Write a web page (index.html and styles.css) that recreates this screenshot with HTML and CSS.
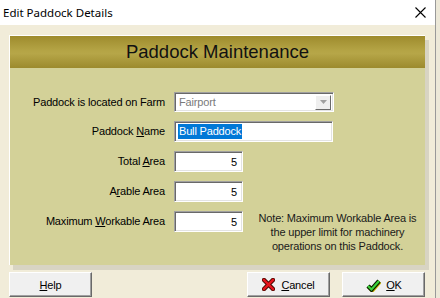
FILE: index.html
```html
<!DOCTYPE html>
<html lang="en">
<head>
  <meta charset="UTF-8">
  <title>Edit Paddock Details</title>
  <link rel="stylesheet" href="styles.css">
</head>
<body>
  <div class="window">
    <div class="titlebar">
      <span class="title">Edit Paddock Details</span>
      <svg class="close" width="11" height="11" viewBox="0 0 11 11">
        <path d="M0.5 0.5L10.5 10.5M10.5 0.5L0.5 10.5" stroke="#000" stroke-width="1.1"/>
      </svg>
    </div>

    <div class="dialog-body">
      <div class="panel">
        <div class="panel-header">Paddock Maintenance</div>
        <div class="panel-body">
          <div class="form-grid">
            <label class="row-label short">Paddock is located on Farm</label>
            <div class="field select disabled">
              <span>Fairport</span>
              <span class="drop-btn">
                <svg width="7" height="4" viewBox="0 0 7 4"><path d="M0 0H7L3.5 4Z" fill="#a0a0a0"/></svg>
              </span>
            </div>

            <label class="row-label">Paddock <u>N</u>ame</label>
            <div class="field name"><span class="selected">Bull Paddock</span></div>

            <label class="row-label">Total <u>A</u>rea</label>
            <div class="field num">5</div>

            <label class="row-label">A<u>r</u>able Area</label>
            <div class="field num">5</div>

            <label class="row-label">Maximum <u>W</u>orkable Area</label>
            <div class="last-row">
              <div class="field num">5</div>
              <p class="note">Note: Maximum Workable Area is<br>the upper limit for machinery<br>operations on this Paddock.</p>
            </div>
          </div>
        </div>
      </div>

      <div class="buttons">
        <button class="btn"><span><u>H</u>elp</span></button>
        <span class="spacer"></span>
        <button class="btn">
          <svg class="btn-icon" width="13" height="13" viewBox="0 0 13 13">
            <path d="M2 2L11 11M11 2L2 11" stroke="#4a0a00" stroke-width="4.4" stroke-linecap="square"/>
            <path d="M2 2L11 11M11 2L2 11" stroke="#e8141c" stroke-width="2.4" stroke-linecap="square"/>
          </svg>
          <span><u>C</u>ancel</span>
        </button>
        <button class="btn ok">
          <svg class="btn-icon" width="16" height="14" viewBox="0 0 16 14">
            <path d="M3 8L6.5 11.5L14 3" fill="none" stroke="#c8b400" stroke-width="4.2" transform="translate(0.8 0.8)"/>
            <path d="M3 8L6.5 11.5L14 3" fill="none" stroke="#0a1a00" stroke-width="4.4"/>
            <path d="M3 8L6.5 11.5L14 3" fill="none" stroke="#3ad43a" stroke-width="2.2"/>
          </svg>
          <span><u>O</u>K</span>
        </button>
      </div>
    </div>
  </div>
</body>
</html>
```

FILE: styles.css
```css
body {
  margin: 0;
  background-color: #ece8d8;
  font-family: "Liberation Sans", Arial, sans-serif;
  font-size: 11px;
  letter-spacing: -0.17px;
  color: #000;
}
.window {
  width: 435px;
  height: 298px;
  border-right: 1px solid #999;
  background-color: #f1ecd9;
  overflow: hidden;
}
.titlebar {
  height: 25px;
  background-color: #fff;
  display: flex;
  align-items: center;
  justify-content: space-between;
  padding: 0 9px 0 3px;
  letter-spacing: 0;
}
.titlebar .title {
  font-family: "Noto Sans", sans-serif;
  font-size: 11.5px;
  margin-top: -1px;
}
.titlebar .close {
  margin-top: -1px;
}
.dialog-body {
  padding: 10px 10px 0 9px;
}
.panel {
  width: 416px;
  height: 230px;
  box-sizing: border-box;
  border-top: 1px solid #fff;
  border-left: 1px solid #fff;
  background-color: #d3d198;
  box-shadow: 4px 5px 0 #d8d4c3;
}
.panel-header {
  height: 32px;
  line-height: 32px;
  text-align: center;
  font-size: 18.5px;
  letter-spacing: 0;
  color: #111;
  background: linear-gradient(to bottom, #9e8b2d 0%, #b4a445 45%, #b6a648 55%, #9c8a2d 100%);
}
.panel-body {
  padding-top: 24px;
}
.form-grid {
  display: grid;
  grid-template-columns: 155px 1fr;
  column-gap: 9px;
  row-gap: 9px;
}
.row-label {
  display: block;
  text-align: right;
  height: 21px;
  line-height: 21px;
  align-self: start;
  white-space: nowrap;
}
.row-label.short {
  height: 20px;
  line-height: 20px;
}
.field {
  height: 21px;
  box-sizing: border-box;
  background-color: #fff;
  border: 1px solid;
  border-color: #a0a0a0 #fff #fff #a0a0a0;
  box-shadow: inset 1px 1px 0 #696969, inset -1px -1px 0 #e3e3e3;
  display: flex;
  align-items: center;
  padding: 0 4px;
}
.field.select {
  width: 160px;
  height: 20px;
  justify-content: space-between;
  padding-right: 2px;
}
.field.disabled {
  color: #7a7a7a;
}
.drop-btn {
  width: 16px;
  height: 15px;
  box-sizing: border-box;
  background-color: #efefef;
  border: 1px solid;
  border-color: #fff #696969 #696969 #fff;
  display: flex;
  align-items: center;
  justify-content: center;
}
.field.name {
  width: 159px;
  padding-left: 3px;
}
.selected {
  background-color: #0078d7;
  color: #fff;
  padding: 1px 1px 2px 1px;
}
.field.num {
  width: 69px;
  justify-content: flex-end;
  padding-right: 5px;
}
.last-row {
  display: flex;
  align-items: flex-start;
}
.note {
  flex: 1;
  margin: 0 0 0 7px;
  text-align: center;
  line-height: 14px;
  color: #1a1a1a;
}
.buttons {
  display: flex;
  align-items: center;
  margin-top: 7px;
  gap: 12px;
}
.spacer {
  flex: 1;
}
.btn {
  width: 83px;
  height: 25px;
  box-sizing: border-box;
  background-color: #f0f0f0;
  border: 1px solid;
  border-color: #fff #696969 #696969 #fff;
  box-shadow: inset -1px -1px 0 #a0a0a0;
  font-family: inherit;
  font-size: 11px;
  letter-spacing: inherit;
  color: #000;
  display: flex;
  align-items: center;
  justify-content: center;
  gap: 6px;
  padding: 0;
}
.btn.ok {
  gap: 5px;
}
.btn-icon {
  display: block;
}
```
